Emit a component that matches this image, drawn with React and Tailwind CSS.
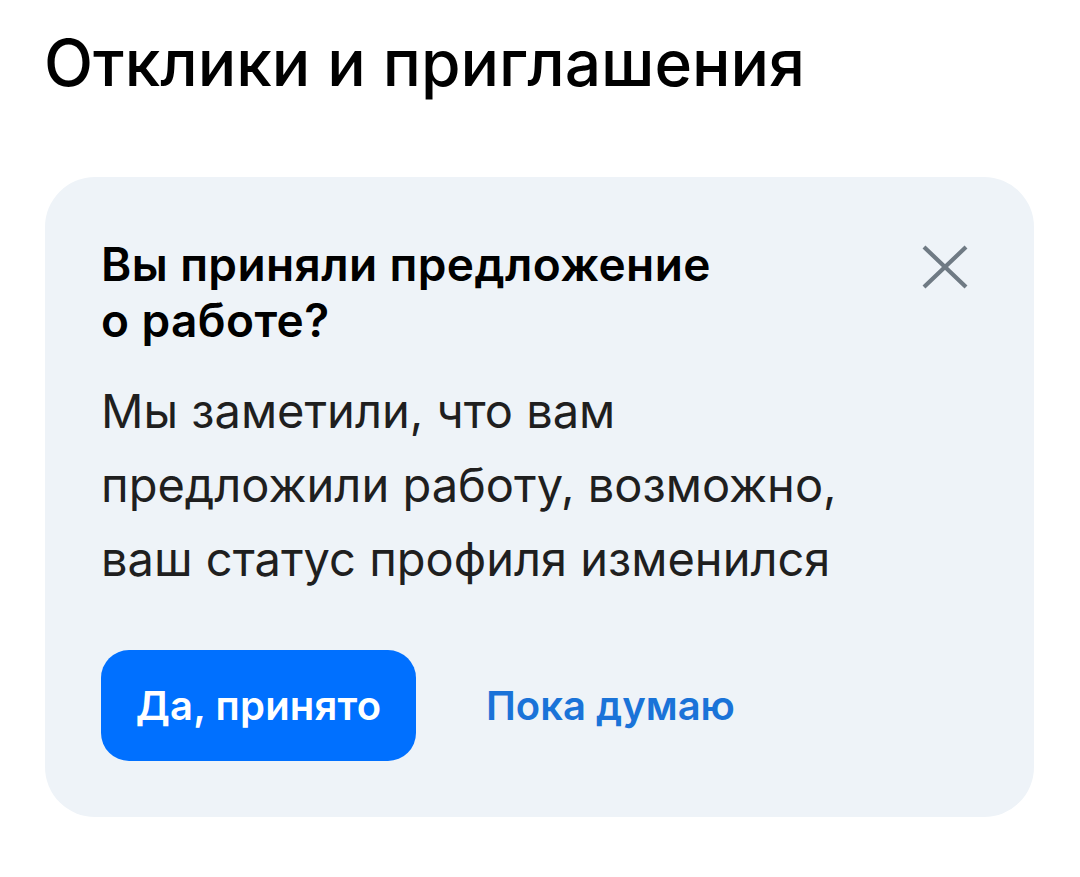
import React from 'react';

const font = { fontFamily: 'Inter, "Noto Sans", sans-serif' };

const CloseIcon = () => (
    <svg width="46" height="44" viewBox="0 0 46 44" fill="none">
        <path d="M2 2L44 42M44 2L2 42" stroke="#6f7a84" strokeWidth="4.2" />
    </svg>
);

const OfferPrompt = () => (
    <div className="ml-[45px] w-[989px] h-[640px] rounded-[50px] bg-[#eef3f8] pl-[56px] pr-[66px] pt-[59px]">
        <div className="flex justify-between items-start">
            <h2 className="text-[46px] leading-[56px] font-semibold text-black tracking-[0.4px]">
                Вы приняли предложение
                <br />
                о работе?
            </h2>
            <button className="mt-[9px]">
                <CloseIcon />
            </button>
        </div>
        <p className="mt-[26px] text-[47px] leading-[74px] text-[#1f1f1f]">
            Мы заметили, что вам
            <br />
            предложили работу, возможно,
            <br />
            ваш статус профиля изменился
        </p>
        <div className="mt-[54px] flex items-center gap-[70px]">
            <button className="w-[315px] h-[111px] rounded-[28px] bg-[#0070ff] text-white text-[40px] font-semibold tracking-[0.2px]">
                Да, принято
            </button>
            <button className="text-[#1a73d8] text-[40px] font-semibold">Пока думаю</button>
        </div>
    </div>
);

export default function App() {
    return (
        <div className="w-[1080px] h-[877px] bg-white pt-[24px]" style={font}>
            <h1 className="pl-[44px] text-[64px] leading-[78px] font-medium text-black">
                Отклики и приглашения
            </h1>
            <div className="mt-[75px]">
                <OfferPrompt />
            </div>
        </div>
    );
}
